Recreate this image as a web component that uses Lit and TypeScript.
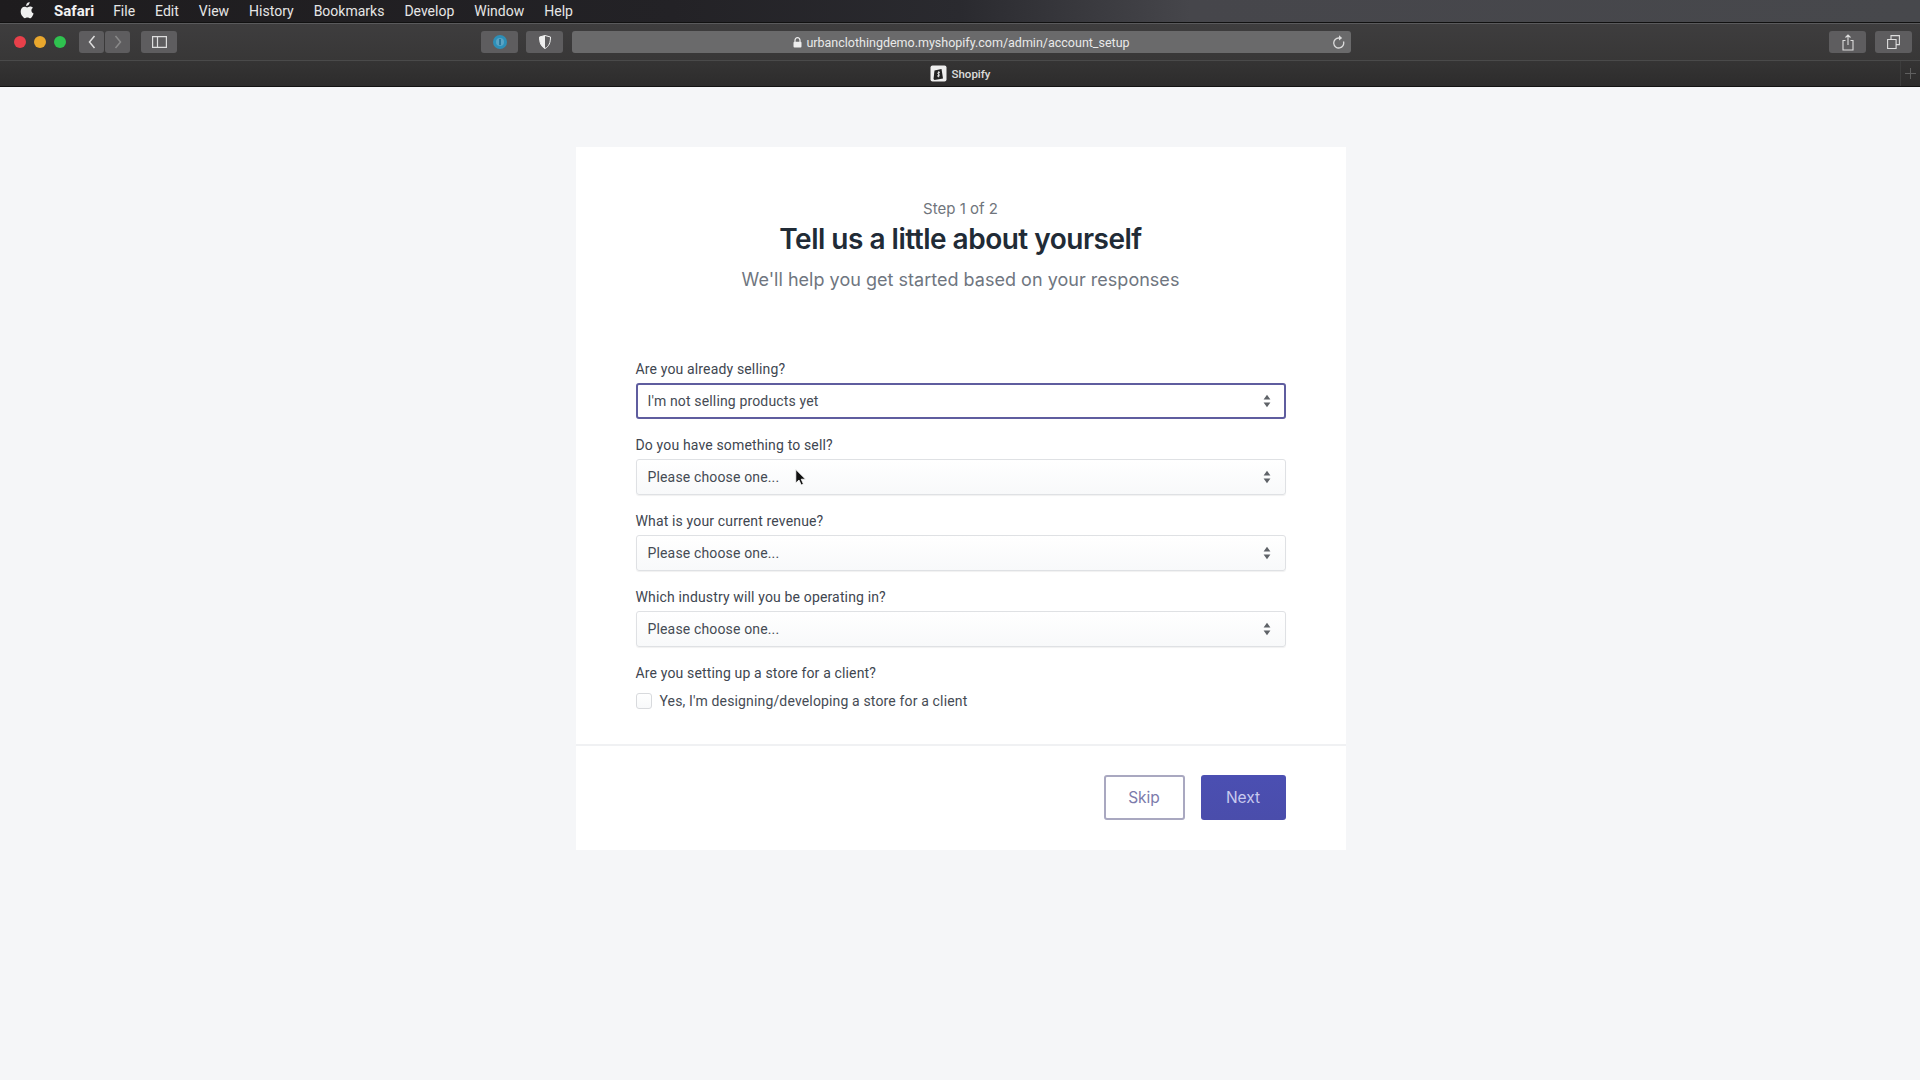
import { css, html, LitElement, svg } from 'lit';
import { customElement } from 'lit/decorators.js';

const MENUS = ['File', 'Edit', 'View', 'History', 'Bookmarks', 'Develop', 'Window', 'Help'];

const FIELDS = [
    { label: 'Are you already selling?', value: "I'm not selling products yet", focus: true },
    { label: 'Do you have something to sell?', value: 'Please choose one...', focus: false },
    { label: 'What is your current revenue?', value: 'Please choose one...', focus: false },
    { label: 'Which industry will you be operating in?', value: 'Please choose one...', focus: false },
];

const apple = svg`<svg width="14" height="17" viewBox="0 0 14 17"><path fill="#eee" d="M9.600 0c.1 1-.3 2-.9 2.700-.6.7-1.500 1.300-2.500 1.200C6.100 3 6.500 2 7.100 1.300 7.700.6 8.800.1 9.600 0zM13 5.800c-.8.500-1.600 1.400-1.600 2.700 0 1.600 1.100 2.500 2.200 3-.3 1-.8 2-1.400 2.900-.6.900-1.300 1.800-2.300 1.800s-1.300-.6-2.500-.6-1.600.6-2.500.6c-1 0-1.700-1-2.400-1.900C1.200 12.800.4 10.500.8 8.400 1.100 6.300 2.700 4.700 4.500 4.700c1.100 0 1.900.7 2.600.7.700 0 1.600-.8 2.900-.8.900 0 2.300.3 3 1.200z"/></svg>`;

const updown = svg`<svg width="8" height="14" viewBox="0 0 8 14"><path fill="#5f6368" d="M4 .8 7.400 5.400H.6zM4 13.200.6 8.600h6.800z"/></svg>`;

@customElement('app-root')
export class AppRoot extends LitElement {
    static styles = [ css`
      :host {
        display: block;
        position: relative;
        width: 1920px;
        height: 1080px;
        overflow: hidden;
        background: #f5f6f8;
        font-family: Roboto, "Noto Sans", sans-serif;
      }

      .menubar {
        height: 23px;
        box-sizing: border-box;
        border-bottom: 1px solid #111;
        display: flex;
        align-items: center;
        padding-left: 20px;
        background: linear-gradient(90deg, #1e1c1e 0%, #232226 35%, #2a2a2f 50%, #46464b 62%, #47484c 100%);
        color: #e6e6e6;
        font-size: 14px;
      }

      .menubar .apple { display: flex; margin-right: 20px; margin-top: -2px; }
      .menubar span { margin-right: 20px; }
      .menubar b { font-size: 15px; font-weight: 700; margin-right: 19px; color: #f2f2f2; }

      .toolbar {
        height: 38px;
        box-sizing: border-box;
        border-top: 1px solid #5a5a5c;
        border-bottom: 1px solid #4a4a4a;
        display: flex;
        align-items: center;
        padding: 0 8px 0 14px;
        background: linear-gradient(#3e3d3e, #383737);
      }

      .lights { display: flex; gap: 8px; margin-right: 13px; }
      .light { width: 12px; height: 12px; border-radius: 50%; }
      .red { background: #e8404a; }
      .yellow { background: #e9a72d; }
      .green { background: #2fc24f; }

      .tb {
        height: 22px;
        width: 37px;
        border-radius: 3px;
        background: #5e5d5f;
        display: flex;
        align-items: center;
        justify-content: center;
        flex: none;
      }

      .tb.narrow { width: 25px; }
      .nav { display: flex; gap: 1px; margin-right: 11px; }
      .sidebar { width: 36px; margin-right: 304px; }
      .onepass { margin-right: 8px; }
      .shield { margin-right: 9px; }

      .url {
        width: 779px;
        height: 22px;
        border-radius: 3px;
        background: #6a6a6b;
        color: #e9e9e9;
        font-size: 12.500px;
        display: flex;
        align-items: center;
        justify-content: center;
        gap: 4px;
        position: relative;
        flex: none;
      }

      .reload { position: absolute; right: 5px; top: 3px; display: flex; }
      .right { margin-left: auto; display: flex; gap: 9px; }

      .tabbar {
        height: 26px;
        box-sizing: border-box;
        display: flex;
        align-items: center;
        justify-content: center;
        gap: 5px;
        position: relative;
        background: linear-gradient(#353434, #2d2c2c);
        border-bottom: 1px solid #131313;
        color: #dcdcdc;
        font-size: 11.500px;
        font-weight: 500;
      }

      .plus {
        position: absolute;
        right: 0;
        top: 0;
        bottom: 0;
        width: 19px;
        border-left: 1px solid #3d3d3d;
        display: flex;
        align-items: center;
        justify-content: center;
      }

      main { display: flex; justify-content: center; padding: 60px 0 0 1px; }

      .card {
        width: 770px;
        height: 703px;
        background: #fff;
        display: flex;
        flex-direction: column;
      }

      .head { text-align: center; padding-top: 51px; height: 212px; box-sizing: border-box; }

      .step { font-family: Inter, sans-serif; font-size: 15px; line-height: 22px; color: #70757c; }

      h1 {
        margin: 1px 0 0;
        font-family: Inter, sans-serif;
        font-size: 28px;
        line-height: 36px;
        font-weight: 600;
        letter-spacing: -0.5px;
        color: #212b36;
      }

      .sub {
        margin-top: 11px;
        font-family: Inter, sans-serif;
        font-size: 18px;
        line-height: 24px;
        letter-spacing: .02px;
        color: #6f7680;
      }

      form { padding: 0 60px; display: flex; flex-direction: column; }

      .field { height: 76px; }

      label, .q { display: block; font-size: 14px; line-height: 20px; color: #404650; letter-spacing: .15px; }

      .select {
        margin-top: 4px;
        height: 36px;
        box-sizing: border-box;
        border: 1px solid #dfe1e4;
        border-radius: 3px;
        background: linear-gradient(#ffffff, #f8f9fa);
        box-shadow: 0 1px 1px rgba(0, 0, 0, .06);
        display: flex;
        align-items: center;
        justify-content: space-between;
        padding: 0 14px 0 11px;
        font-size: 14px;
        color: #454b54;
        letter-spacing: .15px;
      }

      .select.focus {
        border: 2px solid #5f5d9f;
        background: #fff;
        padding: 0 13px 0 10px;
        box-shadow: none;
      }

      .check { display: flex; align-items: center; gap: 8px; margin-top: 10px; font-size: 14px; color: #454b54; letter-spacing: .15px; }

      .box {
        width: 16px;
        height: 16px;
        box-sizing: border-box;
        border: 1px solid #d8dadd;
        border-radius: 3px;
        background: linear-gradient(#fff, #f8f9fa);
      }

      .foot {
        margin-top: 35px;
        border-top: 2px solid #f0f1f3;
        padding: 29px 60px 0;
        display: flex;
        justify-content: flex-end;
        gap: 16px;
      }

      .btn {
        height: 45px;
        box-sizing: border-box;
        border-radius: 3px;
        display: flex;
        align-items: center;
        justify-content: center;
        font-family: Inter, sans-serif;
        font-size: 15.500px;
      }

      .skip { width: 81px; border: 2px solid #a9a8c0; color: #7c7bab; background: #fff; }
      .next { width: 85px; background: linear-gradient(#4b4fb2, #4a4dab); color: #c8caee; }

      .cursor { position: absolute; left: 795px; top: 469px; display: flex; }
    `];

    public render() {
        return html`
          <div class="menubar">
            <div class="apple">${apple}</div>
            <b>Safari</b>
            ${MENUS.map(m => html`<span>${m}</span>`)}
          </div>
          <div class="toolbar">
            <div class="lights">
              <div class="light red"></div>
              <div class="light yellow"></div>
              <div class="light green"></div>
            </div>
            <div class="nav">
              <div class="tb narrow">
                <svg width="8" height="14" viewBox="0 0 8 14"><path d="M6.500 1 1.500 7l5 6" fill="none" stroke="#ddd" stroke-width="1.500"/></svg>
              </div>
              <div class="tb narrow">
                <svg width="8" height="14" viewBox="0 0 8 14"><path d="M1.500 1l5 6-5 6" fill="none" stroke="#8a8a8a" stroke-width="1.500"/></svg>
              </div>
            </div>
            <div class="tb sidebar">
              <svg width="15" height="12" viewBox="0 0 15 12"><path d="M.6.6h13.800v10.800H.6zM5.500.6v10.800" fill="none" stroke="#ddd" stroke-width="1.200"/></svg>
            </div>
            <div class="tb onepass">
              <svg width="16" height="16" viewBox="0 0 16 16"><circle cx="8" cy="8" r="7" fill="#2d8fb8"/><circle cx="8" cy="8" r="4" fill="#5aa4c4"/><rect x="7.200" y="5" width="1.600" height="6" fill="#246f94"/></svg>
            </div>
            <div class="tb shield">
              <svg width="12" height="14" viewBox="0 0 12 14"><path d="M6 .5 11.500 2c0 5.500-1.500 9.500-5.500 11.500C2 11.500.5 7.500.5 2z" fill="none" stroke="#eee"/><path d="M6 .5 .5 2C.5 7.500 2 11.500 6 13.500z" fill="#eee"/></svg>
            </div>
            <div class="url">
              <svg width="9" height="11" viewBox="0 0 9 11"><path d="M2 5V3.200a2.500 2.500 0 0 1 5 0V5" fill="none" stroke="#eee" stroke-width="1.200"/><rect x=".5" y="4.800" width="8" height="5.700" rx="1" fill="#eee"/></svg>
              <span>urbanclothingdemo.myshopify.com/admin/account_setup</span>
              <div class="reload">
                <svg width="14" height="15" viewBox="0 0 14 15"><path d="M11.500 6.500A5 5 0 1 1 7 3" fill="none" stroke="#ddd" stroke-width="1.300" transform="translate(0 1)"/><path d="M7 1.200 10.200 4 7 6.400z" fill="#ddd"/></svg>
              </div>
            </div>
            <div class="right">
              <div class="tb">
                <svg width="12" height="17" viewBox="0 0 12 17"><path d="M3.500 6.500H1v9.500h10V6.500H8.500M6 11V1M3.500 3.500 6 1l2.500 2.500" fill="none" stroke="#ddd" stroke-width="1.100"/></svg>
              </div>
              <div class="tb">
                <svg width="13" height="14" viewBox="0 0 13 14"><path d="M.6 4.500h8.500v9H.6zM4 4.500V.6h8.400v9H9.100" fill="none" stroke="#ddd" stroke-width="1.100"/></svg>
              </div>
            </div>
          </div>
          <div class="tabbar">
            <svg width="17" height="17" viewBox="0 0 17 17">
              <rect x=".5" y=".5" width="16" height="16" rx="2" fill="#eee"/>
              <path d="M4.500 5.500 11.500 4l1.500 9.500-8.500 1.500-1-1z" fill="#222"/>
              <path d="M10 7.500C8 6.700 7 8.200 8.500 9.200c1.500.9.500 2.500-1.500 1.600M8.700 6.300v6" fill="none" stroke="#eee"/>
            </svg>
            <span>Shopify</span>
            <div class="plus">
              <svg width="11" height="11" viewBox="0 0 11 11"><path d="M5.500 0v11M0 5.500h11" stroke="#5f5f5f"/></svg>
            </div>
          </div>
          <main>
            <div class="card">
              <div class="head">
                <div class="step">Step 1 of 2</div>
                <h1>Tell us a little about yourself</h1>
                <div class="sub">We'll help you get started based on your responses</div>
              </div>
              <form>
                ${FIELDS.map(f => html`
                  <div class="field">
                    <label>${f.label}</label>
                    <div class="select ${f.focus ? 'focus' : ''}">
                      <span>${f.value}</span>
                      ${updown}
                    </div>
                  </div>
                `)}
                <div class="q">Are you setting up a store for a client?</div>
                <div class="check">
                  <div class="box"></div>
                  <span>Yes, I'm designing/developing a store for a client</span>
                </div>
              </form>
              <div class="foot">
                <div class="btn skip">Skip</div>
                <div class="btn next">Next</div>
              </div>
            </div>
          </main>
          <div class="cursor">
            <svg width="11" height="18" viewBox="0 0 11 18"><path d="M.8.5v13.500l3.200-3 2.200 5 2.200-1-2.200-4.800h4.300z" fill="#111" stroke="#fff" stroke-width=".8"/></svg>
          </div>
        `;
    }
}
